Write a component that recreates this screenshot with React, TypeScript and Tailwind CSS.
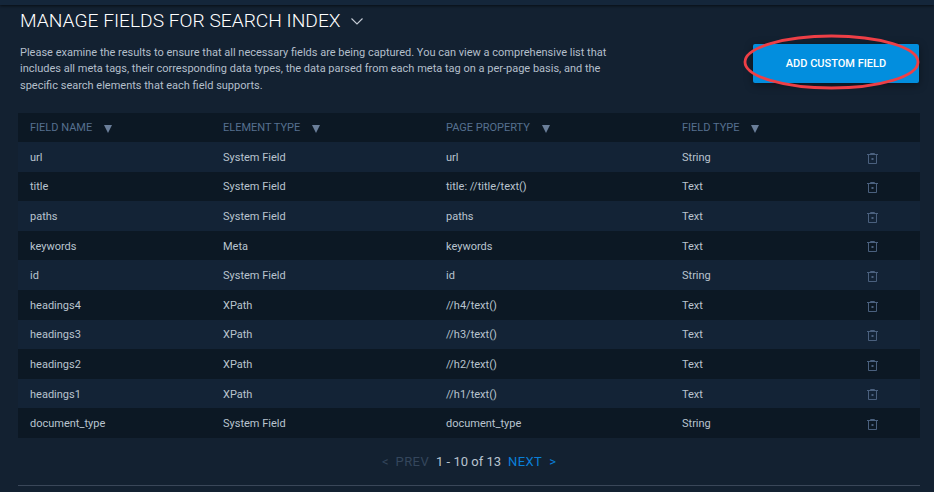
import React from "react";

const rows = [
  ["url", "System Field", "url", "String"],
  ["title", "System Field", "title: //title/text()", "Text"],
  ["paths", "System Field", "paths", "Text"],
  ["keywords", "Meta", "keywords", "Text"],
  ["id", "System Field", "id", "String"],
  ["headings4", "XPath", "//h4/text()", "Text"],
  ["headings3", "XPath", "//h3/text()", "Text"],
  ["headings2", "XPath", "//h2/text()", "Text"],
  ["headings1", "XPath", "//h1/text()", "Text"],
  ["document_type", "System Field", "document_type", "String"],
];

function Trash() {
  return (
    <svg width="11" height="11" viewBox="0 0 11 11" fill="none" stroke="#4a607e" strokeWidth="1">
      <path d="M0 1.5H11" />
      <path d="M3.5 1.5V0.5H7.5V1.5" />
      <path d="M1.5 1.5V10.5H9.5V1.5" />
      <path d="M4.5 5H6.5V7H4.5Z" fill="#4a607e" stroke="none" />
    </svg>
  );
}

function Head({ label, w }: { label: string; w: string }) {
  return (
    <div className={`${w} flex items-center gap-[12px]`}>
      <span>{label}</span>
      <svg width="8" height="9" viewBox="0 0 8 9">
        <path d="M0 1H8L4 9Z" fill="#6a7e99" />
      </svg>
    </div>
  );
}

export default function App() {
  return (
    <div className="relative w-[934px] h-[492px] overflow-hidden bg-[#132131] font-['Roboto',sans-serif]">
      <div className="h-[5px] bg-[#14263a] shadow-[0_1px_3px_rgba(0,0,0,0.6)]" />
      <div className="pl-[18px]">
        <div className="flex items-center h-[32px] pl-[2px] gap-[10px]">
          <h1 className="text-[19.2px] leading-[32px] font-light text-white">MANAGE FIELDS FOR SEARCH INDEX</h1>
          <svg width="12" height="7" viewBox="0 0 12 7" fill="none" stroke="#c5ccd5" strokeWidth="1.1">
            <path d="M0.5 0.5L6 6L11.5 0.5" />
          </svg>
        </div>
        <div className="flex justify-between items-start w-[901px] h-[50px] mt-[7px]">
          <p className="ml-[2px] mt-[1px] w-[592px] text-[11px] leading-[16.4px] text-[#b4bfcb]">
            Please examine the results to ensure that all necessary fields are being captured. You can view a comprehensive list that includes all meta tags, their corresponding data types, the data parsed from each meta tag on a per-page basis, and the specific search elements that each field supports.
          </p>
          <button className="w-[166px] h-[39px] pt-[1px] rounded-[2px] bg-[#028ede] text-white text-[11px] font-medium shadow-[0_2px_8px_rgba(0,0,0,0.4)]">
            ADD CUSTOM FIELD
          </button>
        </div>
        <div className="mt-[19px] w-[902px]">
          <div className="flex items-center h-[29px] pt-[1px] bg-[#0c1824] pl-[12px] text-[11px] text-[#56708f]">
            <Head label="FIELD NAME" w="w-[193px]" />
            <Head label="ELEMENT TYPE" w="w-[223px]" />
            <Head label="PAGE PROPERTY" w="w-[236px]" />
            <Head label="FIELD TYPE" w="w-[190px]" />
          </div>
          {rows.map((r, i) => (
            <div
              key={r[0]}
              className={`flex items-center h-[29.6px] pt-[2.6px] pl-[12px] text-[11px] text-[#b9c4cf] ${i % 2 === 0 ? "bg-[#132336]" : "bg-[#0c1824]"}`}
            >
              <div className="w-[193px]">{r[0]}</div>
              <div className="w-[223px]">{r[1]}</div>
              <div className="w-[236px]">{r[2]}</div>
              <div className="w-[185px]">{r[3]}</div>
              <Trash />
            </div>
          ))}
        </div>
        <div className="flex items-center justify-center gap-[7px] w-[902px] h-[47px] text-[13px]">
          <span className="text-[#34465c]">&lt;</span>
          <span className="text-[#34465c] tracking-[0.4px]">PREV</span>
          <span className="text-[#b9c4cf]">1 - 10 of 13</span>
          <span className="text-[#0a7fd8] tracking-[0.4px]">NEXT</span>
          <span className="text-[#0a7fd8]">&gt;</span>
        </div>
        <div className="w-[902px] border-t border-[#3a4759]" />
      </div>
      <svg className="absolute left-[743px] top-[34px]" width="178" height="57" viewBox="0 0 178 57" fill="none">
        <ellipse cx="88.5" cy="28" rx="86.5" ry="26" stroke="#ee3f46" strokeWidth="2.8" />
      </svg>
    </div>
  );
}
